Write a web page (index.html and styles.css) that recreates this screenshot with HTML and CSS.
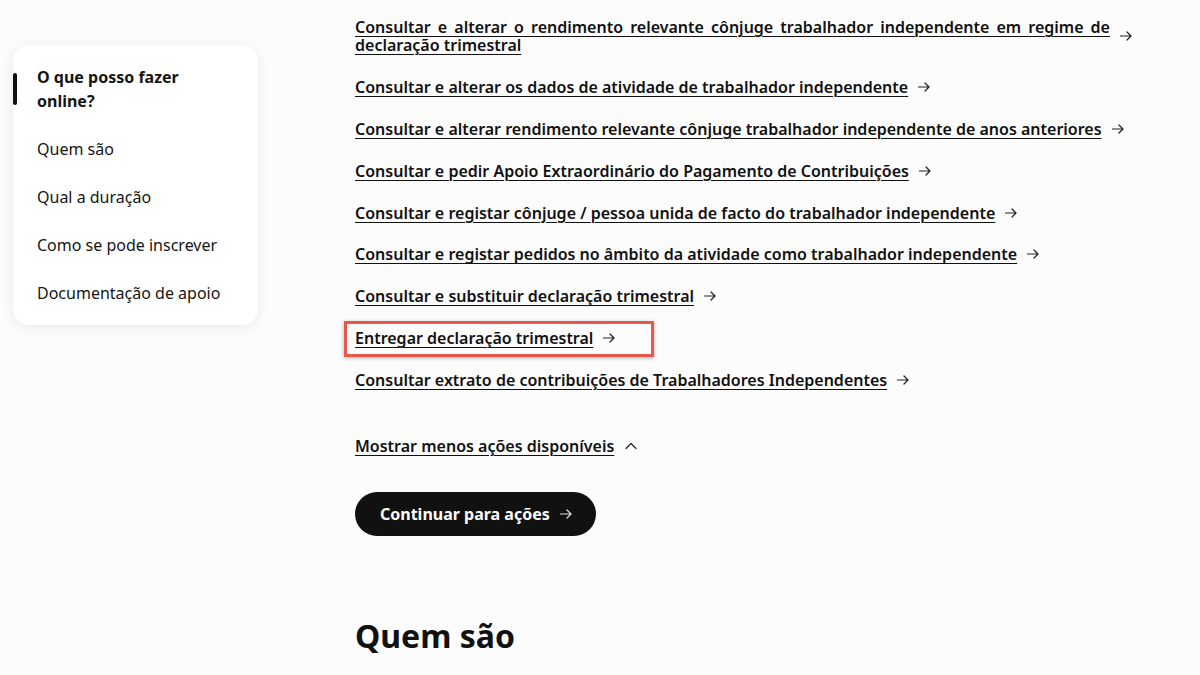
FILE: index.html
```html
<!DOCTYPE html>
<html lang="pt">
<head>
<meta charset="utf-8">
<title>Trabalhadores independentes</title>
<link rel="stylesheet" href="styles.css">
</head>
<body>
<div class="page">
  <aside class="sidebar">
    <nav class="side-card">
      <a class="side-item active" href="#">O que posso fazer online?</a>
      <a class="side-item" href="#">Quem são</a>
      <a class="side-item" href="#">Qual a duração</a>
      <a class="side-item" href="#">Como se pode inscrever</a>
      <a class="side-item" href="#">Documentação de apoio</a>
    </nav>
  </aside>
  <main class="content">
    <ul class="actions">
      <li class="action"><a class="action-link" href="#"><span class="action-text justify">Consultar e alterar o rendimento relevante cônjuge trabalhador independente em regime de declaração trimestral</span><svg class="arrow" viewBox="0 0 12 10"><path d="M0.5 5H11M7 1l4 4-4 4"/></svg></a></li>
      <li class="action"><a class="action-link" href="#"><span class="action-text">Consultar e alterar os dados de atividade de trabalhador independente</span><svg class="arrow" viewBox="0 0 12 10"><path d="M0.5 5H11M7 1l4 4-4 4"/></svg></a></li>
      <li class="action"><a class="action-link" href="#"><span class="action-text">Consultar e alterar rendimento relevante cônjuge trabalhador independente de anos anteriores</span><svg class="arrow" viewBox="0 0 12 10"><path d="M0.5 5H11M7 1l4 4-4 4"/></svg></a></li>
      <li class="action"><a class="action-link" href="#"><span class="action-text">Consultar e pedir Apoio Extraordinário do Pagamento de Contribuições</span><svg class="arrow" viewBox="0 0 12 10"><path d="M0.5 5H11M7 1l4 4-4 4"/></svg></a></li>
      <li class="action"><a class="action-link" href="#"><span class="action-text">Consultar e registar cônjuge / pessoa unida de facto do trabalhador independente</span><svg class="arrow" viewBox="0 0 12 10"><path d="M0.5 5H11M7 1l4 4-4 4"/></svg></a></li>
      <li class="action"><a class="action-link" href="#"><span class="action-text">Consultar e registar pedidos no âmbito da atividade como trabalhador independente</span><svg class="arrow" viewBox="0 0 12 10"><path d="M0.5 5H11M7 1l4 4-4 4"/></svg></a></li>
      <li class="action"><a class="action-link" href="#"><span class="action-text">Consultar e substituir declaração trimestral</span><svg class="arrow" viewBox="0 0 12 10"><path d="M0.5 5H11M7 1l4 4-4 4"/></svg></a></li>
      <li class="action highlighted"><a class="action-link" href="#"><span class="action-text">Entregar declaração trimestral</span><svg class="arrow" viewBox="0 0 12 10"><path d="M0.5 5H11M7 1l4 4-4 4"/></svg></a><span class="highlight-box"></span></li>
      <li class="action"><a class="action-link" href="#"><span class="action-text">Consultar extrato de contribuições de Trabalhadores Independentes</span><svg class="arrow" viewBox="0 0 12 10"><path d="M0.5 5H11M7 1l4 4-4 4"/></svg></a></li>
    </ul>
    <a class="toggle" href="#"><span class="toggle-text">Mostrar menos ações disponíveis</span><svg class="chevron" viewBox="0 0 12 8"><path d="M1 6.5l5-5 5 5"/></svg></a>
    <div class="cta-row">
      <a class="cta" href="#">Continuar para ações<svg class="arrow cta-arrow" viewBox="0 0 12 10"><path d="M0.5 5H11M7 1l4 4-4 4"/></svg></a>
    </div>
    <h2 class="section-title">Quem são</h2>
  </main>
</div>
</body>
</html>
```

FILE: styles.css
```css
* { box-sizing: border-box; }
html, body { margin: 0; padding: 0; }
body {
  background: #fcfcfc;
  font-family: "Noto Sans", "Open Sans", sans-serif;
  color: #111;
  overflow: hidden;
  height: 675px;
}
a { color: inherit; text-decoration: none; }

.page {
  display: flex;
  align-items: flex-start;
}

.sidebar {
  width: 258px;
  padding: 45px 0 0 13px;
  flex-shrink: 0;
}
.side-card {
  background: #fff;
  border-radius: 16px;
  box-shadow: 0 2px 14px rgba(0, 0, 0, 0.08);
  padding: 20px 24px 20px 24px;
  display: flex;
  flex-direction: column;
  gap: 24px;
  width: 245px;
}
.side-item {
  position: relative;
  font-size: 16px;
  line-height: 24px;
  color: #151515;
  max-width: 170px;
  white-space: normal;
}
.side-item:not(.active) { max-width: none; white-space: nowrap; }
.side-item.active { font-weight: 700; }
.side-item.active::before {
  content: "";
  position: absolute;
  left: -24px;
  top: 8px;
  width: 4px;
  height: 32px;
  border-radius: 2px;
  background: #111;
}

.content {
  padding: 18px 0 0 97px;
  flex: 1;
}
.actions {
  list-style: none;
  margin: 0;
  padding: 0;
  display: flex;
  flex-direction: column;
  gap: 23.9px;
}
.action {
  position: relative;
  display: flex;
  line-height: 18px;
}
.action-link {
  display: flex;
  align-items: center;
  gap: 10px;
  font-size: 16px;
  font-weight: 600;
  line-height: 18px;
  color: #111;
}
.action-text {
  text-decoration: underline;
  text-decoration-thickness: 1px;
  text-underline-offset: 3px;
  max-width: 755px;
}
.action-text.justify { text-align: justify; }
.arrow {
  width: 12px;
  height: 10px;
  flex-shrink: 0;
  fill: none;
  stroke: #222;
  stroke-width: 1.2;
  stroke-linecap: round;
  stroke-linejoin: round;
}
.highlight-box {
  position: absolute;
  left: -11px;
  top: -8px;
  width: 310px;
  height: 36px;
  border: 3px solid #e8594b;
  box-shadow: 0 1px 4px rgba(0, 0, 0, 0.3);
  pointer-events: none;
}

.toggle {
  display: flex;
  width: fit-content;
  align-items: center;
  gap: 11px;
  margin-top: 48px;
  font-size: 16px;
  font-weight: 600;
  line-height: 18px;
}
.toggle-text {
  text-decoration: underline;
  text-decoration-thickness: 1px;
  text-underline-offset: 3px;
}
.chevron {
  width: 12px;
  height: 8px;
  fill: none;
  stroke: #222;
  stroke-width: 1.2;
  stroke-linecap: round;
  stroke-linejoin: round;
}

.cta-row {
  display: flex;
  margin-top: 37px;
}
.cta {
  display: flex;
  align-items: center;
  gap: 10px;
  height: 44px;
  padding: 0 24px 0 25px;
  border-radius: 22px;
  background: #111;
  color: #fff;
  font-size: 16px;
  font-weight: 700;
}
.cta-arrow { stroke: #ddd; }

.section-title {
  margin: 80px 0 0 0;
  font-size: 32px;
  line-height: 40px;
  font-weight: 700;
  color: #111;
}
```
